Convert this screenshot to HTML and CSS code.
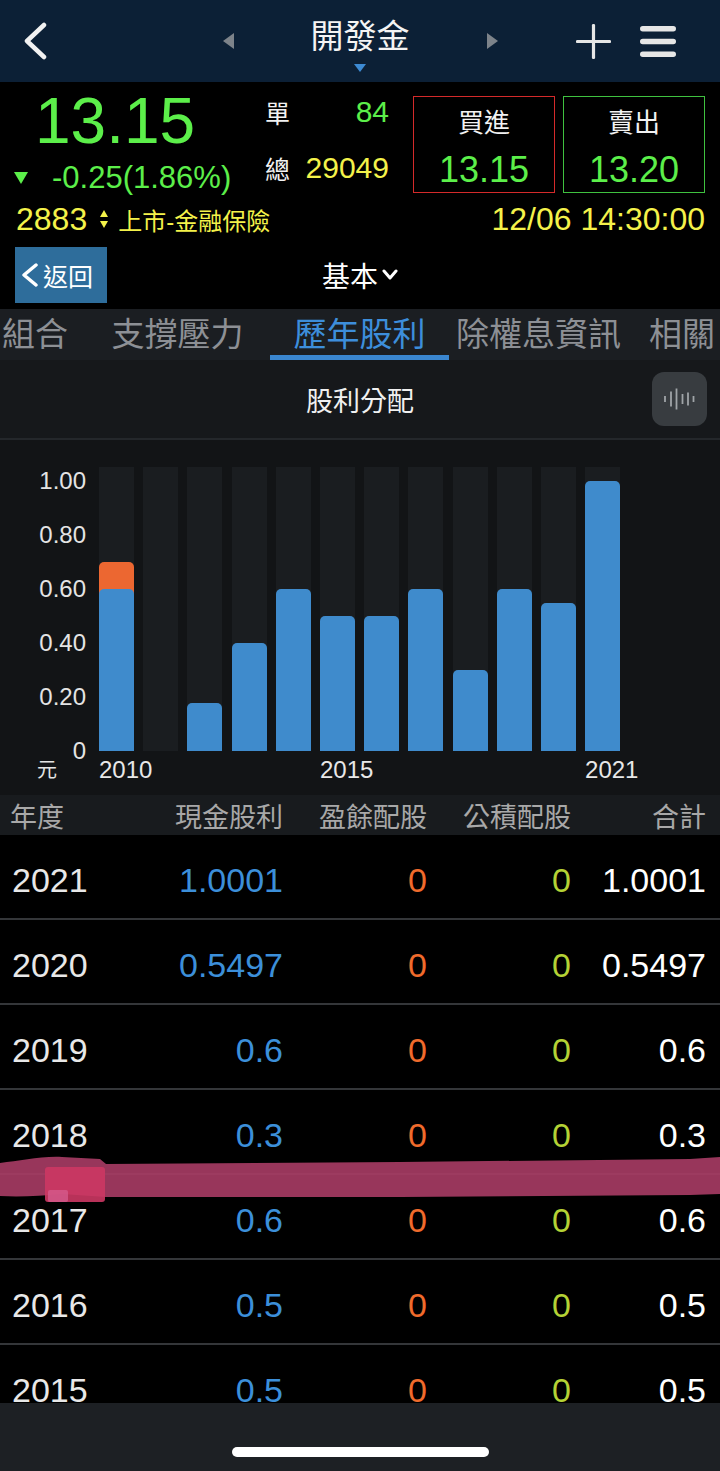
FILE: index.html
```html
<!DOCTYPE html>
<html lang="zh-Hant">
<head>
  <meta charset="utf-8">
  <title>開發金 歷年股利</title>
  <link rel="stylesheet" href="styles.css">
</head>
<body>
<div class="screen">

  <!-- 頂部導覽 -->
  <header class="nav">
    <div class="nav-left">
      <svg class="nav-back" width="26" height="38" viewBox="0 0 26 38"><polyline points="21,3 4,19 21,35"/></svg>
    </div>
    <div class="nav-center">
      <span class="nav-arrow left"></span>
      <div class="nav-title">
        <span>開發金</span>
        <span class="nav-caret"></span>
      </div>
      <span class="nav-arrow right"></span>
    </div>
    <div class="nav-right">
      <svg class="nav-plus" width="35" height="35" viewBox="0 0 35 35"><line x1="17.5" y1="1.5" x2="17.5" y2="33.5"/><line x1="1.5" y1="17.5" x2="33.5" y2="17.5"/></svg>
      <svg class="nav-menu" width="36" height="31" viewBox="0 0 36 31"><rect x="0" y="0" width="36" height="5.5" rx="2.75"/><rect x="0" y="12.75" width="36" height="5.5" rx="2.75"/><rect x="0" y="25.5" width="36" height="5.5" rx="2.75"/></svg>
    </div>
  </header>

  <!-- 報價 -->
  <section class="quote">
    <div class="quote-main">
      <div class="price-col">
        <div class="price">13.15</div>
        <div class="change"><span class="tri-down"></span>-0.25(1.86%)</div>
      </div>
      <div class="vol-col">
        <div class="vol-row"><span class="vol-label">單</span><span class="vol-num green">84</span></div>
        <div class="vol-row"><span class="vol-label">總</span><span class="vol-num yellow">29049</span></div>
      </div>
      <div class="order buy">
        <div class="order-title">買進</div>
        <div class="order-price">13.15</div>
      </div>
      <div class="order sell">
        <div class="order-title">賣出</div>
        <div class="order-price">13.20</div>
      </div>
    </div>
    <div class="quote-info">
      <div class="info-left">
        <span class="code">2883</span>
        <svg class="updown" width="8" height="18" viewBox="0 0 8 18"><polygon points="4,0 8,7 0,7"/><polygon points="0,11 8,11 4,18"/></svg>
        <span class="market">上市-金融保險</span>
      </div>
      <span class="time">12/06 14:30:00</span>
    </div>
  </section>

  <!-- 次導覽 -->
  <div class="subnav">
    <div class="back-btn">
      <svg width="20" height="24" viewBox="0 0 20 24"><polyline points="16,2 4,12 16,22"/></svg>
      <span>返回</span>
    </div>
    <div class="subnav-title">
      <span>基本</span>
      <svg width="16" height="12" viewBox="0 0 16 12"><polyline points="2,2 8,9 14,2"/></svg>
    </div>
  </div>

  <nav class="tabs">
    <span class="tab">組合</span>
    <span class="tab">支撐壓力</span>
    <span class="tab active">歷年股利</span>
    <span class="tab">除權息資訊</span>
    <span class="tab">相關</span>
  </nav>

  <div class="section-bar">
    <div class="section-title">股利分配</div>
    <div class="wave-btn">
      <svg width="34" height="24" viewBox="0 0 34 24">
        <line x1="2" y1="9" x2="2" y2="15"/>
        <line x1="8" y1="4.5" x2="8" y2="19.5"/>
        <line x1="13.5" y1="1.5" x2="13.5" y2="22.5"/>
        <line x1="19.5" y1="7" x2="19.5" y2="17"/>
        <line x1="25" y1="5.5" x2="25" y2="18.5"/>
        <line x1="30.5" y1="9" x2="30.5" y2="15"/>
      </svg>
    </div>
  </div>

  <!-- 股利分配圖 -->
  <div class="chart">
    <div class="y-axis">
      <div class="y-tick">1.00</div>
      <div class="y-tick">0.80</div>
      <div class="y-tick">0.60</div>
      <div class="y-tick">0.40</div>
      <div class="y-tick">0.20</div>
      <div class="y-tick zero"><span class="unit">元</span><span>0</span></div>
    </div>
    <div class="plot">
      <div class="cols">
        <div class="col"><div class="bar stock" style="height:33px"></div><div class="bar cash" style="height:162px"></div></div>
        <div class="col"></div>
        <div class="col"><div class="bar cash" style="height:48px"></div></div>
        <div class="col"><div class="bar cash" style="height:108px"></div></div>
        <div class="col"><div class="bar cash" style="height:162px"></div></div>
        <div class="col"><div class="bar cash" style="height:135px"></div></div>
        <div class="col"><div class="bar cash" style="height:135px"></div></div>
        <div class="col"><div class="bar cash" style="height:162px"></div></div>
        <div class="col"><div class="bar cash" style="height:81px"></div></div>
        <div class="col"><div class="bar cash" style="height:162px"></div></div>
        <div class="col"><div class="bar cash" style="height:148px"></div></div>
        <div class="col"><div class="bar cash" style="height:270px"></div></div>
      </div>
      <div class="x-labels">
        <span>2010</span><span></span><span></span><span></span><span></span>
        <span>2015</span><span></span><span></span><span></span><span></span><span></span>
        <span>2021</span>
      </div>
    </div>
  </div>

  <!-- 股利表 -->
  <div class="table">
    <div class="thead">
      <span>年度</span><span>現金股利</span><span>盈餘配股</span><span>公積配股</span><span>合計</span>
    </div>
    <div class="trow"><span class="yr">2021</span><span class="cash">1.0001</span><span class="stk">0</span><span class="cap">0</span><span class="tot">1.0001</span></div>
    <div class="trow"><span class="yr">2020</span><span class="cash">0.5497</span><span class="stk">0</span><span class="cap">0</span><span class="tot">0.5497</span></div>
    <div class="trow"><span class="yr">2019</span><span class="cash">0.6</span><span class="stk">0</span><span class="cap">0</span><span class="tot">0.6</span></div>
    <div class="trow"><span class="yr">2018</span><span class="cash">0.3</span><span class="stk">0</span><span class="cap">0</span><span class="tot">0.3</span></div>
    <div class="trow"><span class="yr">2017</span><span class="cash">0.6</span><span class="stk">0</span><span class="cap">0</span><span class="tot">0.6</span></div>
    <div class="trow"><span class="yr">2016</span><span class="cash">0.5</span><span class="stk">0</span><span class="cap">0</span><span class="tot">0.5</span></div>
    <div class="trow"><span class="yr">2015</span><span class="cash">0.5</span><span class="stk">0</span><span class="cap">0</span><span class="tot">0.5</span></div>

    <!-- 螢光筆塗抹 -->
    <svg class="scribble" width="720" height="60" viewBox="0 0 720 60">
      <path class="ink" d="M0,13 C20,11 40,6 62,7 L100,9 L106,14 L400,12 L690,9 L720,7 L720,44 L690,45 L400,47 L106,47 L62,44 C40,46 20,47 0,46 Z"/>
      <rect class="ink-dark" x="45" y="17" width="60" height="35" rx="3"/>
      <rect class="ink-light" x="48" y="40" width="20" height="12" rx="2"/>
    </svg>
  </div>

  <div class="home-bar"><div class="home-indicator"></div></div>
</div>
</body>
</html>
```

FILE: styles.css
```css
body{
	margin: 0;
	background: #000;
	color: #fff;
	font-family: "Liberation Sans", "Noto Sans CJK TC", sans-serif;
}
.screen{
	width: 720px;
	height: 1471px;
	display: flex;
	flex-direction: column;
	overflow: hidden;
}
.green{ color: #5cef4a; }
.yellow{ color: #f4f24a; }

/* 頂部導覽 */
.nav{
	flex: none;
	height: 82px;
	background: #0c2036;
	display: grid;
	grid-template-columns: 1fr auto 1fr;
	align-items: center;
}
.nav-left{
	display: flex;
	padding-left: 23px;
}
.nav-back polyline{
	fill: none;
	stroke: #f2f2f2;
	stroke-width: 4.5;
	stroke-linecap: round;
	stroke-linejoin: round;
}
.nav-center{
	display: flex;
	align-items: center;
	gap: 77px;
}
.nav-arrow{
	width: 0;
	height: 0;
	border-top: 8.5px solid transparent;
	border-bottom: 8.5px solid transparent;
}
.nav-arrow.left{ border-right: 11px solid #7d838a; }
.nav-arrow.right{ border-left: 11px solid #7d838a; }
.nav-title{
	display: flex;
	flex-direction: column;
	align-items: center;
	margin-top: 7px;
	font-size: 33px;
	line-height: 40px;
	color: #f4f4f4;
}
.nav-caret{
	width: 0;
	height: 0;
	margin-top: 7px;
	border-left: 6px solid transparent;
	border-right: 6px solid transparent;
	border-top: 8px solid #3d8bd4;
}
.nav-right{
	display: flex;
	justify-content: flex-end;
	align-items: center;
	gap: 29px;
	padding-right: 44px;
}
.nav-plus line{
	stroke: #e6e6e6;
	stroke-width: 3.2;
	stroke-linecap: round;
}
.nav-menu rect{ fill: #e6e6e6; }

/* 報價 */
.quote{
	flex: none;
	height: 158px;
	box-sizing: border-box;
	padding: 14px 15px 0 14px;
}
.quote-main{
	display: flex;
	align-items: flex-start;
}
.price-col{ width: 251px; }
.price{
	margin: -7px 0 0 21px;
	font-size: 64px;
	line-height: 64px;
	color: #5cef4a;
}
.change{
	display: flex;
	align-items: center;
	margin-top: 8px;
	font-size: 31px;
	line-height: 34px;
	color: #5cef4a;
}
.tri-down{
	width: 0;
	height: 0;
	margin: 0 24px 0 0;
	border-left: 7px solid transparent;
	border-right: 7px solid transparent;
	border-top: 12px solid #5cef4a;
}
.vol-col{
	width: 124px;
	margin-top: -1px;
	display: flex;
	flex-direction: column;
	gap: 22px;
}
.vol-row{
	height: 34px;
	display: flex;
	justify-content: space-between;
	align-items: center;
}
.vol-label{
	font-size: 25px;
	color: #f2f2f2;
}
.vol-num{ font-size: 30px; }
.order{
	width: 142px;
	height: 97px;
	box-sizing: border-box;
	border: 1px solid;
	display: flex;
	flex-direction: column;
	align-items: center;
}
.order.buy{
	margin-left: 24px;
	border-color: #d42a2a;
}
.order.sell{
	margin-left: 8px;
	border-color: #3fc13f;
}
.order-title{
	margin-top: 9px;
	font-size: 26px;
	line-height: 34px;
	color: #f2f2f2;
}
.order-price{
	margin-top: 10px;
	font-size: 36px;
	line-height: 40px;
	color: #5cef4a;
}
.quote-info{
	height: 36px;
	margin-top: 6px;
	display: flex;
	justify-content: space-between;
	align-items: center;
	color: #f4f24a;
}
.info-left{
	display: flex;
	align-items: center;
	margin-left: 2px;
}
.code{ font-size: 32px; }
.updown{
	margin: 0 10px 0 13px;
	fill: #f4f24a;
}
.market{ font-size: 24px; }
.time{ font-size: 32px; }

/* 次導覽 */
.subnav{
	flex: none;
	height: 69px;
	display: grid;
	grid-template-columns: 1fr auto 1fr;
	align-items: center;
}
.back-btn{
	justify-self: start;
	margin-left: 15px;
	width: 92px;
	height: 56px;
	box-sizing: border-box;
	padding-left: 5px;
	background: #2e6d9b;
	display: flex;
	align-items: center;
	gap: 3px;
	font-size: 25px;
}
.back-btn polyline,
.subnav-title polyline{
	fill: none;
	stroke: #fff;
	stroke-width: 3.5;
	stroke-linecap: round;
	stroke-linejoin: round;
}
.subnav-title{
	display: flex;
	align-items: center;
	gap: 4px;
	font-size: 28px;
}
.subnav-title polyline{ stroke-width: 3; }

/* 分頁 */
.tabs{
	flex: none;
	height: 51px;
	background: #1b1e22;
	display: flex;
	overflow: hidden;
	white-space: nowrap;
	font-size: 33px;
	line-height: 51px;
	color: #8d9095;
}
.tab{
	flex: none;
	text-align: center;
}
.tab:nth-child(1){ width: 100px; margin-left: -15px; }
.tab:nth-child(2){ width: 185px; }
.tab:nth-child(3){ width: 179px; }
.tab:nth-child(4){ width: 179px; }
.tab:nth-child(5){ width: 108px; }
.tab.active{
	color: #3d8edb;
	box-shadow: inset 0 -5px 0 #3a86cf;
}

.section-bar{
	flex: none;
	height: 78px;
	background: #16181b;
	border-bottom: 2px solid #24272b;
	display: grid;
	grid-template-columns: 1fr auto 1fr;
	align-items: center;
}
.section-title{
	grid-column: 2;
	font-size: 27px;
	color: #f0f0f0;
}
.wave-btn{
	justify-self: end;
	margin-right: 13px;
	width: 55px;
	height: 54px;
	border-radius: 12px;
	background: #383c40;
	display: flex;
	align-items: center;
	justify-content: center;
}
.wave-btn line{
	stroke: #a0a4a8;
	stroke-width: 1.8;
}

/* 圖表 */
.chart{
	flex: none;
	height: 355px;
	box-sizing: border-box;
	padding-top: 14px;
	background: #121416;
	display: flex;
	align-items: flex-start;
}
.y-axis{
	width: 86px;
	display: flex;
	flex-direction: column;
	font-size: 24px;
	color: #e4e4e4;
}
.y-tick{
	height: 54px;
	display: flex;
	align-items: center;
	justify-content: flex-end;
}
.y-tick.zero{ justify-content: space-between; }
.unit{
	align-self: flex-end;
	margin: 0 0 -2px 37px;
	font-size: 20px;
	line-height: 20px;
}
.plot{
	margin: 13px 0 0 13px;
}
.cols{
	height: 284px;
	display: flex;
	gap: 9.2px;
}
.col{
	width: 35px;
	background: #1a1d20;
	display: flex;
	flex-direction: column;
	justify-content: flex-end;
}
.bar{ border-radius: 5px 5px 0 0; }
.bar.cash{ background: #3f8bcc; }
.bar.stock{
	background: #ec6731;
	margin-bottom: -6px;
}
.x-labels{
	margin-top: 7px;
	display: flex;
	gap: 9.2px;
	font-size: 24px;
	line-height: 24px;
	color: #e8e8e8;
}
.x-labels span{
	flex: none;
	width: 35px;
	white-space: nowrap;
}

/* 表格 */
.table{
	flex: 1;
	position: relative;
	overflow: hidden;
}
.thead,
.trow{
	display: grid;
	grid-template-columns: 130px 141px 144px 144px 135px;
	padding: 0 14px 0 12px;
	align-items: center;
	text-align: right;
}
.thead span:first-child,
.trow span:first-child{ text-align: left; }
.thead{
	height: 40px;
	background: #181b1e;
	font-size: 27px;
	color: #a8a8a8;
}
.thead span:first-child{ margin-left: -2px; }
.trow{
	height: 85px;
	box-sizing: border-box;
	padding-top: 8px;
	border-bottom: 2px solid #343639;
	font-size: 34px;
}
.yr{ color: #e8e8e8; }
.cash{ color: #3c8fd9; }
.stk{ color: #f06b2c; }
.cap{ color: #b4d235; }
.tot{ color: #fff; }

.scribble{
	position: absolute;
	left: 0;
	top: 355px;
	pointer-events: none;
}
.scribble .ink{
	fill: #a83c65;
	opacity: 0.9;
}
.scribble .ink-dark{
	fill: #cc3763;
	opacity: 0.9;
}
.scribble .ink-light{
	fill: #d45a8c;
	opacity: 0.8;
}

.home-bar{
	flex: none;
	height: 68px;
	box-sizing: border-box;
	padding-top: 44px;
	background: #1d2024;
	display: flex;
	justify-content: center;
}
.home-indicator{
	width: 257px;
	height: 10px;
	border-radius: 5px;
	background: #fff;
}
```
